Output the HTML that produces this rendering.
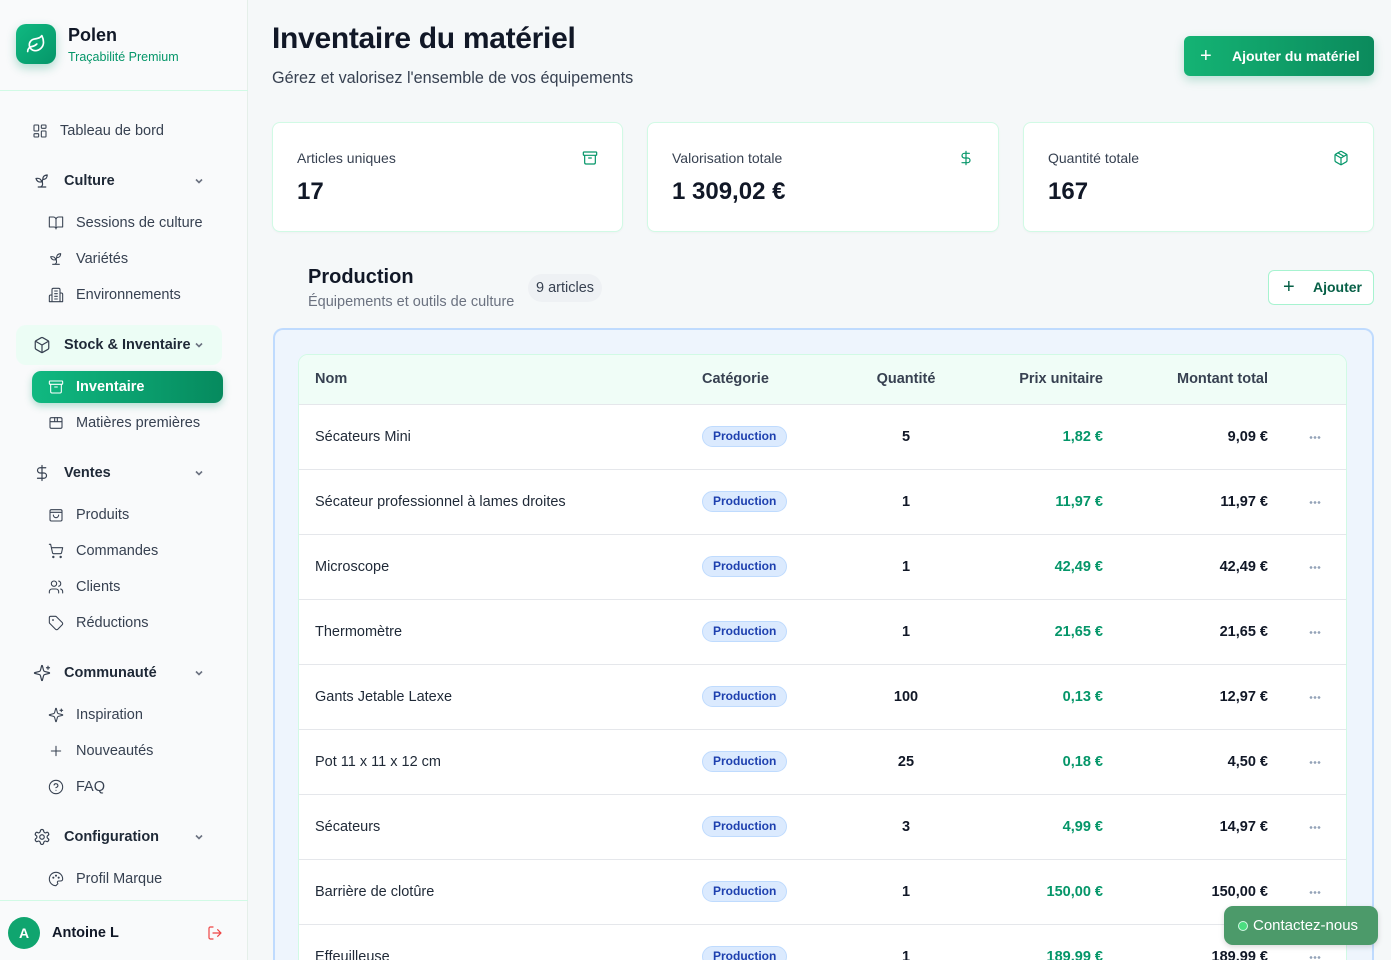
<!DOCTYPE html>
<html><head><meta charset="utf-8">
<style>
*{box-sizing:border-box;margin:0;padding:0}
html,body{width:1391px;height:960px;overflow:hidden}
body{background:#f5f8f9;font-family:"Liberation Sans",sans-serif;color:#1f2937;position:relative}
.abs{position:absolute}
.sb{position:absolute;left:0;top:0;width:248px;height:960px;background:#f9fafb;border-right:1px solid #e5efe9}
.ni{position:absolute;display:flex;align-items:center;font-size:14.5px;color:#374151;height:20px;transform:translateY(-10px)}
.ni svg{width:16px;height:16px;fill:none;stroke:#374151;stroke-width:1.6;stroke-linecap:round;stroke-linejoin:round}
.grp{font-weight:bold;color:#1f2937}
.grp svg{width:18px;height:18px}
.chev{position:absolute;left:193px;width:12px;height:12px;fill:none;stroke:#6b7280;stroke-width:1.6;transform:translateY(-6px)}
.card{position:absolute;top:122px;height:110px;background:#fff;border:1px solid #d1fae5;border-radius:8px;box-shadow:0 1px 2px rgba(0,0,0,.03)}
.card .l{position:absolute;left:24px;top:27px;font-size:14px;color:#374151}
.card .v{position:absolute;left:24px;top:55px;font-size:24px;font-weight:bold;color:#111827}
.card svg{position:absolute;right:24px;top:27px;width:16px;height:16px;fill:none;stroke:#059669;stroke-width:1.8;stroke-linecap:round;stroke-linejoin:round}
.row{position:absolute;left:0;width:1049px;height:65px;border-top:1px solid #e5e7eb;background:#fff;font-size:14.5px}
.row>div{position:absolute;top:24px}
.tag{position:absolute;left:403px;top:21px!important;height:21px;padding:0 10px;background:#dbeafe;border:1px solid #bfdbfe;border-radius:11px;color:#1e40af;font-size:12px;font-weight:bold;line-height:19px}
.q{left:560px;width:94px;text-align:center;font-weight:bold;color:#111827}
.p{right:245px;color:#059669;font-weight:bold}
.m{right:80px;color:#111827;font-weight:bold}
.row>.d{left:1010px;top:31px;width:12px;height:3px;background:radial-gradient(circle,#94a3b8 1.2px,transparent 1.5px) 0 0/4px 3px repeat-x}
</style></head><body>
<div class="sb">
  <div class="abs" style="left:16px;top:24px;width:40px;height:40px;border-radius:10px;background:linear-gradient(135deg,#10b981,#059669);box-shadow:0 4px 10px rgba(5,150,105,.3)">
    <svg viewBox="0 0 24 24" style="position:absolute;left:10px;top:10px;width:20px;height:20px;fill:none;stroke:#fff;stroke-width:2;stroke-linecap:round;stroke-linejoin:round"><path d="M11 20A7 7 0 0 1 9.8 6.1C15.5 5 17 4.48 19 2c1 2 2 4.18 2 8 0 5.5-4.78 10-10 10Z"/><path d="M2 21c0-3 1.85-5.36 5.08-6C9.5 14.52 12 13 13 12"/></svg>
  </div>
  <div class="abs" style="left:68px;top:25px;font-size:18px;font-weight:bold;color:#111827">Polen</div>
  <div class="abs" style="left:68px;top:50px;font-size:12.5px;color:#059669">Traçabilité Premium</div>
  <div class="abs" style="left:0;top:90px;width:248px;border-top:1px solid #d1fae5"></div>

  <div class="ni" style="left:32px;top:131px"><svg viewBox="0 0 24 24"><rect x="3" y="3" width="7" height="9" rx="1"/><rect x="14" y="3" width="7" height="5" rx="1"/><rect x="14" y="12" width="7" height="9" rx="1"/><rect x="3" y="16" width="7" height="5" rx="1"/></svg><span style="margin-left:12px">Tableau de bord</span></div>

  <div class="ni grp" style="left:33px;top:181px"><svg viewBox="0 0 24 24"><path d="M7 20h10M10 20c5.5-2.5.8-6.4 3-10M9.5 9.4c1.1.8 1.8 2.2 2.3 3.7-2 .4-3.5.4-4.8-.3-1.2-.6-2.3-1.9-3-4.2 2.8-.5 4.4 0 5.5.8zM14.1 6a7 7 0 0 0-1.1 4c1.9-.1 3.3-.6 4.3-1.4 1-1 1.600-2.3 1.7-4.6-2.7.1-4 1-4.9 2z"/></svg><span style="margin-left:13px">Culture</span></div>
  <svg class="chev" style="top:181px" viewBox="0 0 12 12"><path d="M3 4.5l3 3 3-3"/></svg>
  <div class="ni" style="left:48px;top:223px"><svg viewBox="0 0 24 24"><path d="M2 3h6a4 4 0 0 1 4 4v14a3 3 0 0 0-3-3H2zM22 3h-6a4 4 0 0 0-4 4v14a3 3 0 0 1 3-3h7z"/></svg><span style="margin-left:12px">Sessions de culture</span></div>
  <div class="ni" style="left:48px;top:259px"><svg viewBox="0 0 24 24"><path d="M7 20h10M10 20c5.5-2.5.8-6.4 3-10M9.5 9.4c1.1.8 1.8 2.2 2.3 3.7-2 .4-3.5.4-4.8-.3-1.2-.6-2.3-1.9-3-4.2 2.8-.5 4.4 0 5.5.8zM14.1 6a7 7 0 0 0-1.1 4c1.9-.1 3.3-.6 4.3-1.4 1-1 1.6-2.3 1.7-4.6-2.7.1-4 1-4.9 2z"/></svg><span style="margin-left:12px">Variétés</span></div>
  <div class="ni" style="left:48px;top:295px"><svg viewBox="0 0 24 24"><path d="M6 22V4a2 2 0 0 1 2-2h8a2 2 0 0 1 2 2v18zM6 12H4a2 2 0 0 0-2 2v8h4M18 9h2a2 2 0 0 1 2 2v11h-4M10 6h4M10 10h4M10 14h4M10 18h4"/></svg><span style="margin-left:12px">Environnements</span></div>

  <div class="abs" style="left:16px;top:325px;width:206px;height:40px;border-radius:10px;background:#ecfdf5"></div>
  <div class="ni grp" style="left:33px;top:345px"><svg viewBox="0 0 24 24"><path d="M21 8a2 2 0 0 0-1-1.73l-7-4a2 2 0 0 0-2 0l-7 4A2 2 0 0 0 3 8v8a2 2 0 0 0 1 1.730l7 4a2 2 0 0 0 2 0l7-4A2 2 0 0 0 21 16z"/><path d="M3.3 7L12 12l8.7-5M12 22V12"/></svg><span style="margin-left:13px">Stock &amp; Inventaire</span></div>
  <svg class="chev" style="top:345px" viewBox="0 0 12 12"><path d="M3 4.5l3 3 3-3"/></svg>
  <div class="abs" style="left:32px;top:371px;width:191px;height:32px;border-radius:9px;background:linear-gradient(90deg,#10b981,#068a5e);box-shadow:0 3px 8px rgba(5,150,105,.3)"></div>
  <div class="ni" style="left:48px;top:387px;color:#fff;font-weight:bold"><svg viewBox="0 0 24 24" style="stroke:#fff"><rect x="2" y="3" width="20" height="5" rx="1"/><path d="M4 8v11a2 2 0 0 0 2 2h12a2 2 0 0 0 2-2V8M10 12h4"/></svg><span style="margin-left:12px">Inventaire</span></div>
  <div class="ni" style="left:48px;top:423px"><svg viewBox="0 0 24 24"><rect x="3" y="4" width="18" height="16" rx="2"/><path d="M3 10h18M10 4v6M14 4v6"/></svg><span style="margin-left:12px">Matières premières</span></div>

  <div class="ni grp" style="left:33px;top:473px"><svg viewBox="0 0 24 24"><path d="M12 2v20M17 5H9.5a3.5 3.5 0 0 0 0 7h5a3.5 3.5 0 0 1 0 7H6"/></svg><span style="margin-left:13px">Ventes</span></div>
  <svg class="chev" style="top:473px" viewBox="0 0 12 12"><path d="M3 4.5l3 3 3-3"/></svg>
  <div class="ni" style="left:48px;top:515px"><svg viewBox="0 0 24 24"><rect x="3" y="4" width="18" height="17" rx="2"/><path d="M3 8h18M8 12a4 4 0 0 0 8 0"/></svg><span style="margin-left:12px">Produits</span></div>
  <div class="ni" style="left:48px;top:551px"><svg viewBox="0 0 24 24"><circle cx="8" cy="21" r="1"/><circle cx="19" cy="21" r="1"/><path d="M2 2h2l2.7 12.4a2 2 0 0 0 2 1.6h9.7a2 2 0 0 0 2-1.6L22 7H5.1"/></svg><span style="margin-left:12px">Commandes</span></div>
  <div class="ni" style="left:48px;top:587px"><svg viewBox="0 0 24 24"><path d="M16 21v-2a4 4 0 0 0-4-4H6a4 4 0 0 0-4 4v2"/><circle cx="9" cy="7" r="4"/><path d="M22 21v-2a4 4 0 0 0-3-3.9M16 3.1a4 4 0 0 1 0 7.8"/></svg><span style="margin-left:12px">Clients</span></div>
  <div class="ni" style="left:48px;top:623px"><svg viewBox="0 0 24 24"><path d="M12.6 2.6A2 2 0 0 0 11.2 2H4a2 2 0 0 0-2 2v7.2a2 2 0 0 0 .6 1.4l8.7 8.7a2.4 2.4 0 0 0 3.4 0l6.6-6.6a2.4 2.4 0 0 0 0-3.4z"/><circle cx="7.5" cy="7.5" r=".6"/></svg><span style="margin-left:12px">Réductions</span></div>

  <div class="ni grp" style="left:33px;top:673px"><svg viewBox="0 0 24 24"><path d="M9.9 15.5A2 2 0 0 0 8.5 14.1l-6.1-1.6a.5.5 0 0 1 0-1l6.1-1.6A2 2 0 0 0 9.9 8.5l1.6-6.1a.5.5 0 0 1 1 0l1.6 6.1a2 2 0 0 0 1.4 1.4l6.1 1.6a.5.5 0 0 1 0 1l-6.1 1.6a2 2 0 0 0-1.4 1.4l-1.6 6.1a.5.5 0 0 1-1 0zM20 3v4M22 5h-4"/></svg><span style="margin-left:13px">Communauté</span></div>
  <svg class="chev" style="top:673px" viewBox="0 0 12 12"><path d="M3 4.5l3 3 3-3"/></svg>
  <div class="ni" style="left:48px;top:715px"><svg viewBox="0 0 24 24"><path d="M9.9 15.5A2 2 0 0 0 8.5 14.1l-6.1-1.6a.5.5 0 0 1 0-1l6.1-1.6A2 2 0 0 0 9.9 8.5l1.6-6.1a.5.5 0 0 1 1 0l1.6 6.1a2 2 0 0 0 1.4 1.4l6.1 1.6a.5.5 0 0 1 0 1l-6.1 1.6a2 2 0 0 0-1.4 1.4l-1.6 6.1a.5.5 0 0 1-1 0zM20 3v4M22 5h-4"/></svg><span style="margin-left:12px">Inspiration</span></div>
  <div class="ni" style="left:48px;top:751px"><svg viewBox="0 0 24 24"><path d="M5 12h14M12 5v14"/></svg><span style="margin-left:12px">Nouveautés</span></div>
  <div class="ni" style="left:48px;top:787px"><svg viewBox="0 0 24 24"><circle cx="12" cy="12" r="10"/><path d="M9.1 9a3 3 0 0 1 5.8 1c0 2-3 3-3 3M12 17h.01"/></svg><span style="margin-left:12px">FAQ</span></div>

  <div class="ni grp" style="left:33px;top:837px"><svg viewBox="0 0 24 24"><path d="M12.2 2h-.4a2 2 0 0 0-2 2v.2a2 2 0 0 1-1 1.7l-.4.3a2 2 0 0 1-2 0l-.2-.1a2 2 0 0 0-2.7.7l-.2.4a2 2 0 0 0 .7 2.7l.2.1a2 2 0 0 1 1 1.7v.5a2 2 0 0 1-1 1.7l-.2.1a2 2 0 0 0-.7 2.7l.2.4a2 2 0 0 0 2.7.7l.2-.1a2 2 0 0 1 2 0l.4.3a2 2 0 0 1 1 1.7v.2a2 2 0 0 0 2 2h.4a2 2 0 0 0 2-2v-.2a2 2 0 0 1 1-1.7l.4-.3a2 2 0 0 1 2 0l.2.1a2 2 0 0 0 2.7-.7l.2-.4a2 2 0 0 0-.7-2.7l-.2-.1a2 2 0 0 1-1-1.7v-.5a2 2 0 0 1 1-1.7l.2-.1a2 2 0 0 0 .7-2.7l-.2-.4a2 2 0 0 0-2.7-.7l-.2.1a2 2 0 0 1-2 0l-.4-.3a2 2 0 0 1-1-1.7V4a2 2 0 0 0-2-2z"/><circle cx="12" cy="12" r="3"/></svg><span style="margin-left:13px">Configuration</span></div>
  <svg class="chev" style="top:837px" viewBox="0 0 12 12"><path d="M3 4.5l3 3 3-3"/></svg>
  <div class="ni" style="left:48px;top:879px"><svg viewBox="0 0 24 24"><path d="M12 22a10 10 0 1 1 10-10c0 2.5-2 3-3.5 3H16a2 2 0 0 0-1.5 3.3c.6.7.2 1.7-.8 1.7z"/><circle cx="8" cy="10" r=".8"/><circle cx="12" cy="7" r=".8"/><circle cx="16" cy="10" r=".8"/></svg><span style="margin-left:12px">Profil Marque</span></div>

  <div class="abs" style="left:0;top:900px;width:248px;border-top:1px solid #d1fae5"></div>
  <div class="abs" style="left:8px;top:917px;width:32px;height:32px;border-radius:50%;background:#10a56f;color:#fff;font-weight:bold;font-size:14px;text-align:center;line-height:32px">A</div>
  <div class="abs" style="left:52px;top:925px;font-size:14.5px;font-weight:bold;color:#111827">Antoine L</div>
  <svg class="abs" style="left:207px;top:925px;width:16px;height:16px;fill:none;stroke:#ef4444;stroke-width:1.8;stroke-linecap:round;stroke-linejoin:round" viewBox="0 0 24 24"><path d="M9 21H5a2 2 0 0 1-2-2V5a2 2 0 0 1 2-2h4M16 17l5-5-5-5M21 12H9"/></svg>
</div>

<div class="abs" style="left:272px;top:22px;font-size:30px;font-weight:bold;color:#111827;letter-spacing:-.3px">Inventaire du matériel</div>
<div class="abs" style="left:272px;top:69px;font-size:16.2px;color:#374151">Gérez et valorisez l'ensemble de vos équipements</div>
<div class="abs" style="left:1184px;top:36px;width:190px;height:40px;border-radius:6px;background:linear-gradient(90deg,#14b374,#0b8a5c);box-shadow:0 4px 10px rgba(5,150,105,.25);color:#fff;font-size:14px;font-weight:bold;line-height:40px">
  <span style="position:absolute;left:16px;top:0;font-size:20px;font-weight:normal">+</span><span style="position:absolute;left:48px">Ajouter du matériel</span></div>

<div class="card" style="left:272px;width:351px"><div class="l">Articles uniques</div><div class="v">17</div><svg viewBox="0 0 24 24"><rect x="2" y="3" width="20" height="5" rx="1"/><path d="M4 8v11a2 2 0 0 0 2 2h12a2 2 0 0 0 2-2V8M10 12h4"/></svg></div>
<div class="card" style="left:647px;width:352px"><div class="l">Valorisation totale</div><div class="v">1 309,02 €</div><svg viewBox="0 0 24 24"><path d="M12 2v20M17 5H9.5a3.5 3.5 0 0 0 0 7h5a3.5 3.5 0 0 1 0 7H6"/></svg></div>
<div class="card" style="left:1023px;width:351px"><div class="l">Quantité totale</div><div class="v">167</div><svg viewBox="0 0 24 24"><path d="M21 8a2 2 0 0 0-1-1.73l-7-4a2 2 0 0 0-2 0l-7 4A2 2 0 0 0 3 8v8a2 2 0 0 0 1 1.73l7 4a2 2 0 0 0 2 0l7-4A2 2 0 0 0 21 16z"/><path d="M3.3 7L12 12l8.7-5M12 22V12M7.5 4.3l9 5.2"/></svg></div>

<div class="abs" style="left:308px;top:266px;font-size:20px;font-weight:bold;color:#111827">Production</div>
<div class="abs" style="left:308px;top:294px;font-size:14.5px;color:#6b7280">Équipements et outils de culture</div>
<div class="abs" style="left:528px;top:274px;height:28px;padding:0 8px;border-radius:14px;background:#eef1f4;font-size:14.5px;color:#374151;line-height:28px">9 articles</div>
<div class="abs" style="left:1268px;top:270px;width:106px;height:35px;border:1px solid #a7f3d0;border-radius:6px;background:#fff;color:#065f46;font-size:14px;line-height:33px"><span style="position:absolute;left:14px;font-size:20px">+</span><span style="position:absolute;left:44px;font-weight:bold">Ajouter</span></div>

<div class="abs" style="left:273px;top:328px;width:1101px;height:632px;border:2px solid #bfdbfe;border-bottom:none;border-radius:10px 10px 0 0;background:#eef5fd;overflow:hidden">
  <div class="abs" style="left:23px;top:24px;width:1049px;height:640px;border:1px solid #d1fae5;border-radius:10px;background:#fff;overflow:hidden">
    <div class="abs" style="left:0;top:0;width:1049px;height:49px;background:#f0fdf7;font-size:14.5px;font-weight:bold;color:#374151">
      <div class="abs" style="left:16px;top:16px">Nom</div>
      <div class="abs" style="left:403px;top:16px">Catégorie</div>
      <div class="abs" style="left:560px;width:94px;text-align:center;top:16px">Quantité</div>
      <div class="abs" style="right:245px;top:16px">Prix unitaire</div>
      <div class="abs" style="right:80px;top:16px">Montant total</div>
    </div>
    <div class="row" style="top:49px"><div style="left:16px">Sécateurs Mini</div><div class="tag">Production</div><div class="q">5</div><div class="p">1,82 €</div><div class="m">9,09 €</div><div class="d"></div></div>
    <div class="row" style="top:114px"><div style="left:16px">Sécateur professionnel à lames droites</div><div class="tag">Production</div><div class="q">1</div><div class="p">11,97 €</div><div class="m">11,97 €</div><div class="d"></div></div>
    <div class="row" style="top:179px"><div style="left:16px">Microscope</div><div class="tag">Production</div><div class="q">1</div><div class="p">42,49 €</div><div class="m">42,49 €</div><div class="d"></div></div>
    <div class="row" style="top:244px"><div style="left:16px">Thermomètre</div><div class="tag">Production</div><div class="q">1</div><div class="p">21,65 €</div><div class="m">21,65 €</div><div class="d"></div></div>
    <div class="row" style="top:309px"><div style="left:16px">Gants Jetable Latexe</div><div class="tag">Production</div><div class="q">100</div><div class="p">0,13 €</div><div class="m">12,97 €</div><div class="d"></div></div>
    <div class="row" style="top:374px"><div style="left:16px">Pot 11 x 11 x 12 cm</div><div class="tag">Production</div><div class="q">25</div><div class="p">0,18 €</div><div class="m">4,50 €</div><div class="d"></div></div>
    <div class="row" style="top:439px"><div style="left:16px">Sécateurs</div><div class="tag">Production</div><div class="q">3</div><div class="p">4,99 €</div><div class="m">14,97 €</div><div class="d"></div></div>
    <div class="row" style="top:504px"><div style="left:16px">Barrière de clotûre</div><div class="tag">Production</div><div class="q">1</div><div class="p">150,00 €</div><div class="m">150,00 €</div><div class="d"></div></div>
    <div class="row" style="top:569px"><div style="left:16px">Effeuilleuse</div><div class="tag">Production</div><div class="q">1</div><div class="p">189,99 €</div><div class="m">189,99 €</div><div class="d"></div></div>
  </div>
</div>

<div class="abs" style="left:1224px;top:906px;width:154px;height:39px;border-radius:9px;background:#4c9a6a;box-shadow:0 2px 6px rgba(0,0,0,.15);color:#fff;font-size:15px;line-height:39px">
  <span style="position:absolute;left:14px;top:15px;width:10px;height:10px;border-radius:50%;background:#4ade80;border:1px solid #d1fae5"></span><span style="position:absolute;left:29px">Contactez-nous</span></div>
</body></html>
